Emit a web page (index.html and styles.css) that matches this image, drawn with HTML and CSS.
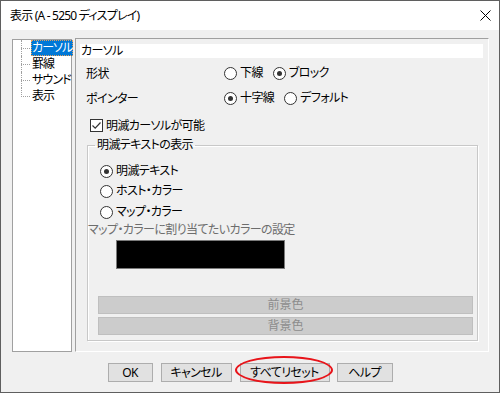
FILE: index.html
```html
<!DOCTYPE html>
<html lang="ja">
<head>
  <meta charset="UTF-8" />
  <title>表示 (A - 5250 ディスプレイ)</title>
  <link rel="stylesheet" href="styles.css">
</head>
<body>
  <div class="window">
    <div class="titlebar">
      <span class="title">表示 (A - 5250 ディスプレイ)</span>
      <svg class="close" width="11" height="11" viewBox="0 0 11 11">
        <path d="M0.5 0.5 L10.5 10.5 M10.5 0.5 L0.5 10.5" stroke="#000" stroke-width="1" fill="none"/>
      </svg>
    </div>

    <div class="main">
      <ul class="tree">
        <li class="sel"><span>カーソル</span></li>
        <li><span>罫線</span></li>
        <li><span>サウンド</span></li>
        <li class="last"><span>表示</span></li>
      </ul>

      <div class="panel">
        <div class="panel-head">カーソル</div>

        <div class="row">
          <span class="label">形状</span>
          <label class="radio"><i></i>下線</label>
          <label class="radio on"><i></i>ブロック</label>
        </div>
        <div class="row">
          <span class="label">ポインター</span>
          <label class="radio on"><i></i>十字線</label>
          <label class="radio"><i></i>デフォルト</label>
        </div>

        <label class="check">
          <i><svg width="11" height="11" viewBox="0 0 11 11"><path d="M1.5 5.5 L4.2 8.2 L9.5 2.5" stroke="#333" stroke-width="1.2" fill="none"/></svg></i>明滅カーソルが可能
        </label>

        <fieldset class="group">
          <legend>明滅テキストの表示</legend>
          <label class="radio grp first on"><i></i>明滅テキスト</label>
          <label class="radio grp"><i></i>ホスト・カラー</label>
          <label class="radio grp third"><i></i>マップ・カラー</label>
          <div class="caption">マップ・カラーに割り当てたいカラーの設定</div>
          <div class="swatch"></div>
          <button class="wide first" disabled>前景色</button>
          <button class="wide" disabled>背景色</button>
        </fieldset>
      </div>
    </div>

    <div class="footer">
      <button class="btn ok">OK</button>
      <button class="btn cancel">キャンセル</button>
      <span class="mark"><button class="btn reset">すべてリセット</button></span>
      <button class="btn help">ヘルプ</button>
    </div>
  </div>
</body>
</html>
```

FILE: styles.css
```css
* {
  box-sizing: border-box;
}

body {
  margin: 0;
  font-family: "Noto Sans", "Noto Sans CJK JP", sans-serif;
  font-size: 12px;
  letter-spacing: -0.6px;
  color: #000;
  font-feature-settings: "palt";
}

.window {
  width: 500px;
  height: 393px;
  border: 1px solid #5f5f5f;
  background: #f0f0f0;
  display: flex;
  flex-direction: column;
}

.titlebar {
  height: 29px;
  background: #fff;
  display: flex;
  align-items: center;
  justify-content: space-between;
  padding: 0 8px 0 9px;
}

.title {
  line-height: 16px;
  letter-spacing: -0.8px;
}

.main {
  display: flex;
  align-items: flex-start;
  gap: 3px;
  padding: 8px 0 0 11px;
}

/* tree on the left */
.tree {
  width: 60px;
  height: 313px;
  margin: 1px 0 0;
  padding: 0;
  list-style: none;
  background: #fff;
  border: 1px solid #a0a0a0;
  letter-spacing: -0.9px;
}

.tree li {
  position: relative;
  height: 16px;
  line-height: 16px;
  padding-left: 18px;
  white-space: nowrap;
}

.tree li::before {
  content: "";
  position: absolute;
  left: 8px;
  top: 8px;
  width: 9px;
  border-top: 1px dotted #a0a0a0;
}

.tree li::after {
  content: "";
  position: absolute;
  left: 8px;
  top: 0;
  height: 16px;
  border-left: 1px dotted #a0a0a0;
}

.tree li.last::after {
  height: 9px;
}

.tree li span {
  display: inline-block;
  padding: 0 1px;
}

.tree li.sel span {
  min-width: 40px;
  background: #0078d7;
  color: #fff;
  outline: 1px dotted #e0a060;
  outline-offset: -1px;
}

/* right panel */
.panel {
  width: 414px;
  height: 314px;
  border: 1px solid;
  border-color: #a0a0a0 #fff #fff #a0a0a0;
  padding: 5px 5px 0 4px;
}

.panel-head {
  background: #fff;
  height: 14px;
  line-height: 14px;
  padding-left: 1px;
}

.row {
  display: flex;
  align-items: center;
  height: 20px;
  margin-top: 5px;
  padding-left: 6px;
}

.row .label {
  width: 138px;
}

.radio {
  display: flex;
  align-items: center;
  margin-right: 10px;
  line-height: 16px;
}

.radio i {
  width: 13px;
  height: 13px;
  margin-right: 3px;
  border: 1px solid #333;
  border-radius: 50%;
  background: #fff;
  display: inline-flex;
  align-items: center;
  justify-content: center;
}

.radio.on i::after {
  content: "";
  width: 5px;
  height: 5px;
  border-radius: 50%;
  background: #333;
}

.check {
  display: flex;
  align-items: center;
  height: 20px;
  margin-top: 7px;
  padding-left: 10px;
}

.check i {
  width: 13px;
  height: 13px;
  margin-right: 3px;
  border: 1px solid #333;
  background: #fff;
  display: inline-flex;
}

/* group box */
.group {
  margin: 2px 5px 0 7px;
  padding: 0 0 5px 0;
  border: 1px solid #c8c8c8;
  box-shadow: 1px 1px 0 #fff, inset 1px 1px 0 #fff;
}

.group legend {
  margin-left: 7px;
  padding: 0 2px;
  line-height: 16px;
}

.radio.grp {
  height: 20px;
  margin-left: 12px;
}

.radio.grp.first {
  margin-top: 8px;
}

.radio.grp.third {
  margin-top: 1px;
}

.caption {
  margin-top: 1px;
  line-height: 14px;
  color: #6d6d6d;
}

.swatch {
  width: 169px;
  height: 29px;
  margin: 3px 0 0 28px;
  background: #000;
  border: 1px solid #7a7a7a;
}

.wide {
  display: block;
  width: calc(100% - 14px);
  height: 18px;
  margin: 3px 4px 0 10px;
  padding: 0;
  background: #cccccc;
  border: 1px solid #bfbfbf;
  color: #8c8c8c;
  font: inherit;
  letter-spacing: 0;
  line-height: 16px;
}

.wide.first {
  margin-top: 27px;
}

/* bottom buttons */
.footer {
  display: flex;
  justify-content: center;
  gap: 8px;
  padding-top: 11px;
}

.btn {
  height: 19px;
  padding: 0;
  background: #e1e1e1;
  border: 1px solid #adadad;
  font: inherit;
  letter-spacing: inherit;
  line-height: 17px;
  color: #000;
}

.ok { width: 45px; }
.cancel { width: 71px; }
.reset { width: 90px; }
.help { width: 56px; margin-left: -1px; }

.mark {
  position: relative;
  display: flex;
}

.mark::after {
  content: "";
  position: absolute;
  left: -5px;
  right: -3px;
  top: -7px;
  bottom: -2px;
  border: 2px solid #e8141a;
  border-radius: 50%;
}
```
